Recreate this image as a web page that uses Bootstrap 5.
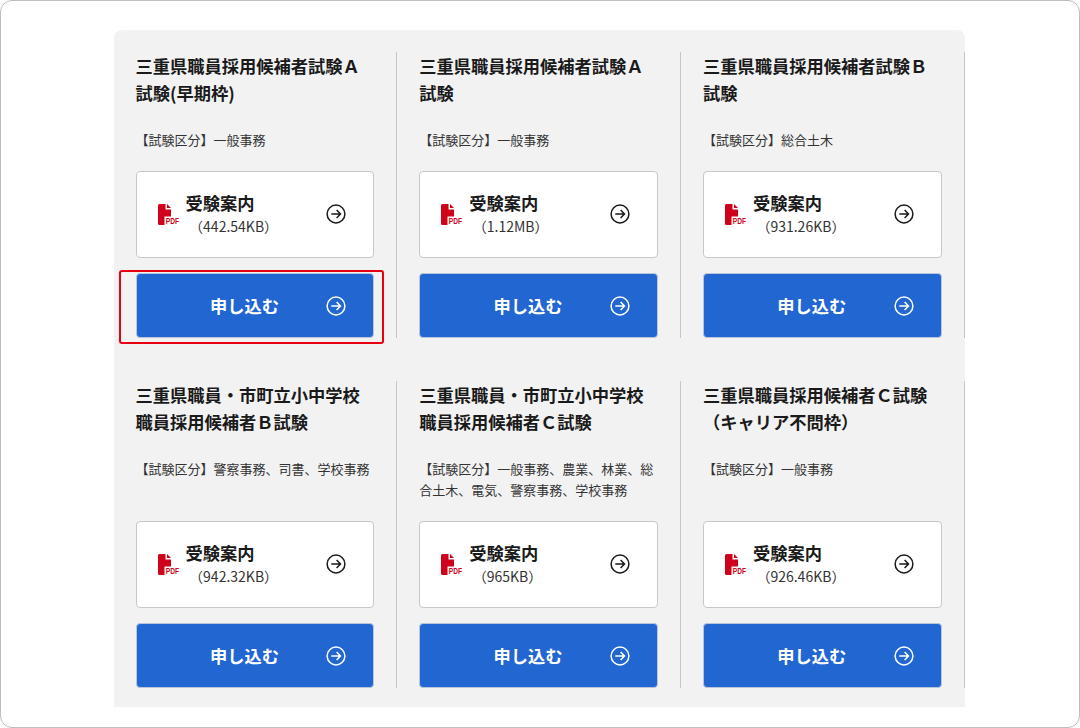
<!DOCTYPE html>
<html lang="ja">
<head>
    <meta charset="UTF-8">
    <title>受験案内</title>
    <link href="https://cdn.jsdelivr.net/npm/bootstrap@5.3.0/dist/css/bootstrap.min.css" rel="stylesheet">
    <style>
        html, body { height: 100%; }
        body {
            background: #fff;
            color: #1a1a1a;
            font-family: "Noto Sans CJK JP", "Noto Sans", sans-serif;
        }
        .frame {
            width: 1080px;
            height: 728px;
            padding: 29px 114px 0 112.6px;
            border: 1px solid #bdbdbd;
            border-radius: 12px;
        }
        .panel {
            width: 851px;
            padding: 21.5px 0 19px;
            background: #f2f2f2;
            border-radius: 8px 8px 0 0;
        }
        .exam-row + .exam-row { margin-top: 42.75px; }
        .exam {
            padding: 0 22px;
            border-right: 1px solid #c6c6c6;
        }
        .exam-title {
            margin: 0 0 22px;
            font-size: 17.25px;
            font-weight: 700;
            line-height: 27.5px;
        }
        .exam-meta {
            margin: 0 0 21px;
            color: #333;
            font-size: 13px;
            line-height: 21px;
        }
        .guide-link, .apply-link {
            width: 100%;
            border-radius: 4px;
            text-decoration: none;
        }
        .guide-link {
            height: 87px;
            margin-bottom: 15.5px;
            padding: 0 27px 0 21px;
            background: #fff;
            border: 1px solid #c8c8c8;
            color: #1a1a1a;
        }
        .guide-name { font-size: 17.25px; font-weight: 700; line-height: 22px; }
        .guide-size {
            margin-top: 1px;
            padding-left: 3.5px;
            color: #333;
            font-size: 14px;
            line-height: 22px;
        }
        .pdf-icon { width: 22px; height: 23px; margin-right: 6px; flex: none; }
        .pdf-icon text {
            font-family: "Liberation Sans", sans-serif;
            font-size: 8.5px;
            font-weight: 700;
            fill: #d0021b;
        }
        .arrow-icon { width: 20px; height: 20px; flex: none; }
        .apply-wrap { position: relative; }
        .apply-link {
            height: 65px;
            padding: 0 27px 0 0;
            background: #2166d1;
            border: 1px solid #b9c6da;
            color: #fff;
            font-size: 17.25px;
            font-weight: 700;
        }
        .apply-text { flex: 1; padding-left: 26px; text-align: center; }
        .callout {
            position: absolute;
            top: -3px;
            left: -17px;
            width: 265px;
            height: 74px;
            border: 2px solid #e60012;
            border-radius: 3px;
            pointer-events: none;
        }
    </style>
</head>
<body>
<svg class="d-none">
    <symbol id="arrow" viewBox="0 0 20 20">
        <circle cx="10" cy="10" r="8.9" fill="none" stroke="currentColor" stroke-width="1.5"/>
        <path d="M5.3 10H14.3M10.6 6L14.5 10L10.6 14" fill="none" stroke="currentColor" stroke-width="1.5"/>
    </symbol>
</svg>
<div class="frame">
    <div class="panel">
        <div class="row g-0 exam-row" id="rowA"></div>
        <div class="row g-0 exam-row" id="rowB"></div>
    </div>
</div>

<script>
    const exams = [
        ["三重県職員採用候補者試験Ａ試験(早期枠)", "【試験区分】一般事務", "（442.54KB）", true],
        ["三重県職員採用候補者試験Ａ試験", "【試験区分】一般事務", "（1.12MB）"],
        ["三重県職員採用候補者試験Ｂ試験", "【試験区分】総合土木", "（931.26KB）"],
        ["三重県職員・市町立小中学校職員採用候補者Ｂ試験", "【試験区分】警察事務、司書、学校事務", "（942.32KB）"],
        ["三重県職員・市町立小中学校職員採用候補者Ｃ試験", "【試験区分】一般事務、農業、林業、総合土木、電気、警察事務、学校事務", "（965KB）"],
        ["三重県職員採用候補者Ｃ試験（キャリア不問枠）", "【試験区分】一般事務", "（926.46KB）"]
    ];

    const pdfIcon = `<svg class="pdf-icon" viewBox="0 0 22 23">
        <path d="M1.5 1H7.5V6.5H13V13.5H6.5V22H1.5Q0 22 0 20.5V2.5Q0 1 1.5 1Z" fill="#d0021b"/>
        <path d="M9 1L13 5H9Z" fill="#d0021b"/>
        <text transform="translate(7.8 20.5) scale(.78 1)">PDF</text>
    </svg>`;

    function examHtml([title, meta, size, marked]) {
        return `<div class="col-4 exam d-flex flex-column">
            <h2 class="exam-title">${title}</h2>
            <p class="exam-meta">${meta}</p>
            <a href="#" class="guide-link d-flex align-items-center mt-auto">
                ${pdfIcon}
                <span class="flex-grow-1">
                    <span class="guide-name d-block">受験案内</span>
                    <span class="guide-size d-block">${size}</span>
                </span>
                <svg class="arrow-icon"><use href="#arrow"/></svg>
            </a>
            <div class="apply-wrap">
                <a href="#" class="apply-link d-flex align-items-center">
                    <span class="apply-text">申し込む</span>
                    <svg class="arrow-icon"><use href="#arrow"/></svg>
                </a>
                ${marked ? '<div class="callout"></div>' : ''}
            </div>
        </div>`;
    }

    document.getElementById("rowA").innerHTML = exams.slice(0, 3).map(examHtml).join("");
    document.getElementById("rowB").innerHTML = exams.slice(3).map(examHtml).join("");
</script>
<script src="https://cdn.jsdelivr.net/npm/bootstrap@5.3.0/dist/js/bootstrap.bundle.min.js"></script>
</body>
</html>
